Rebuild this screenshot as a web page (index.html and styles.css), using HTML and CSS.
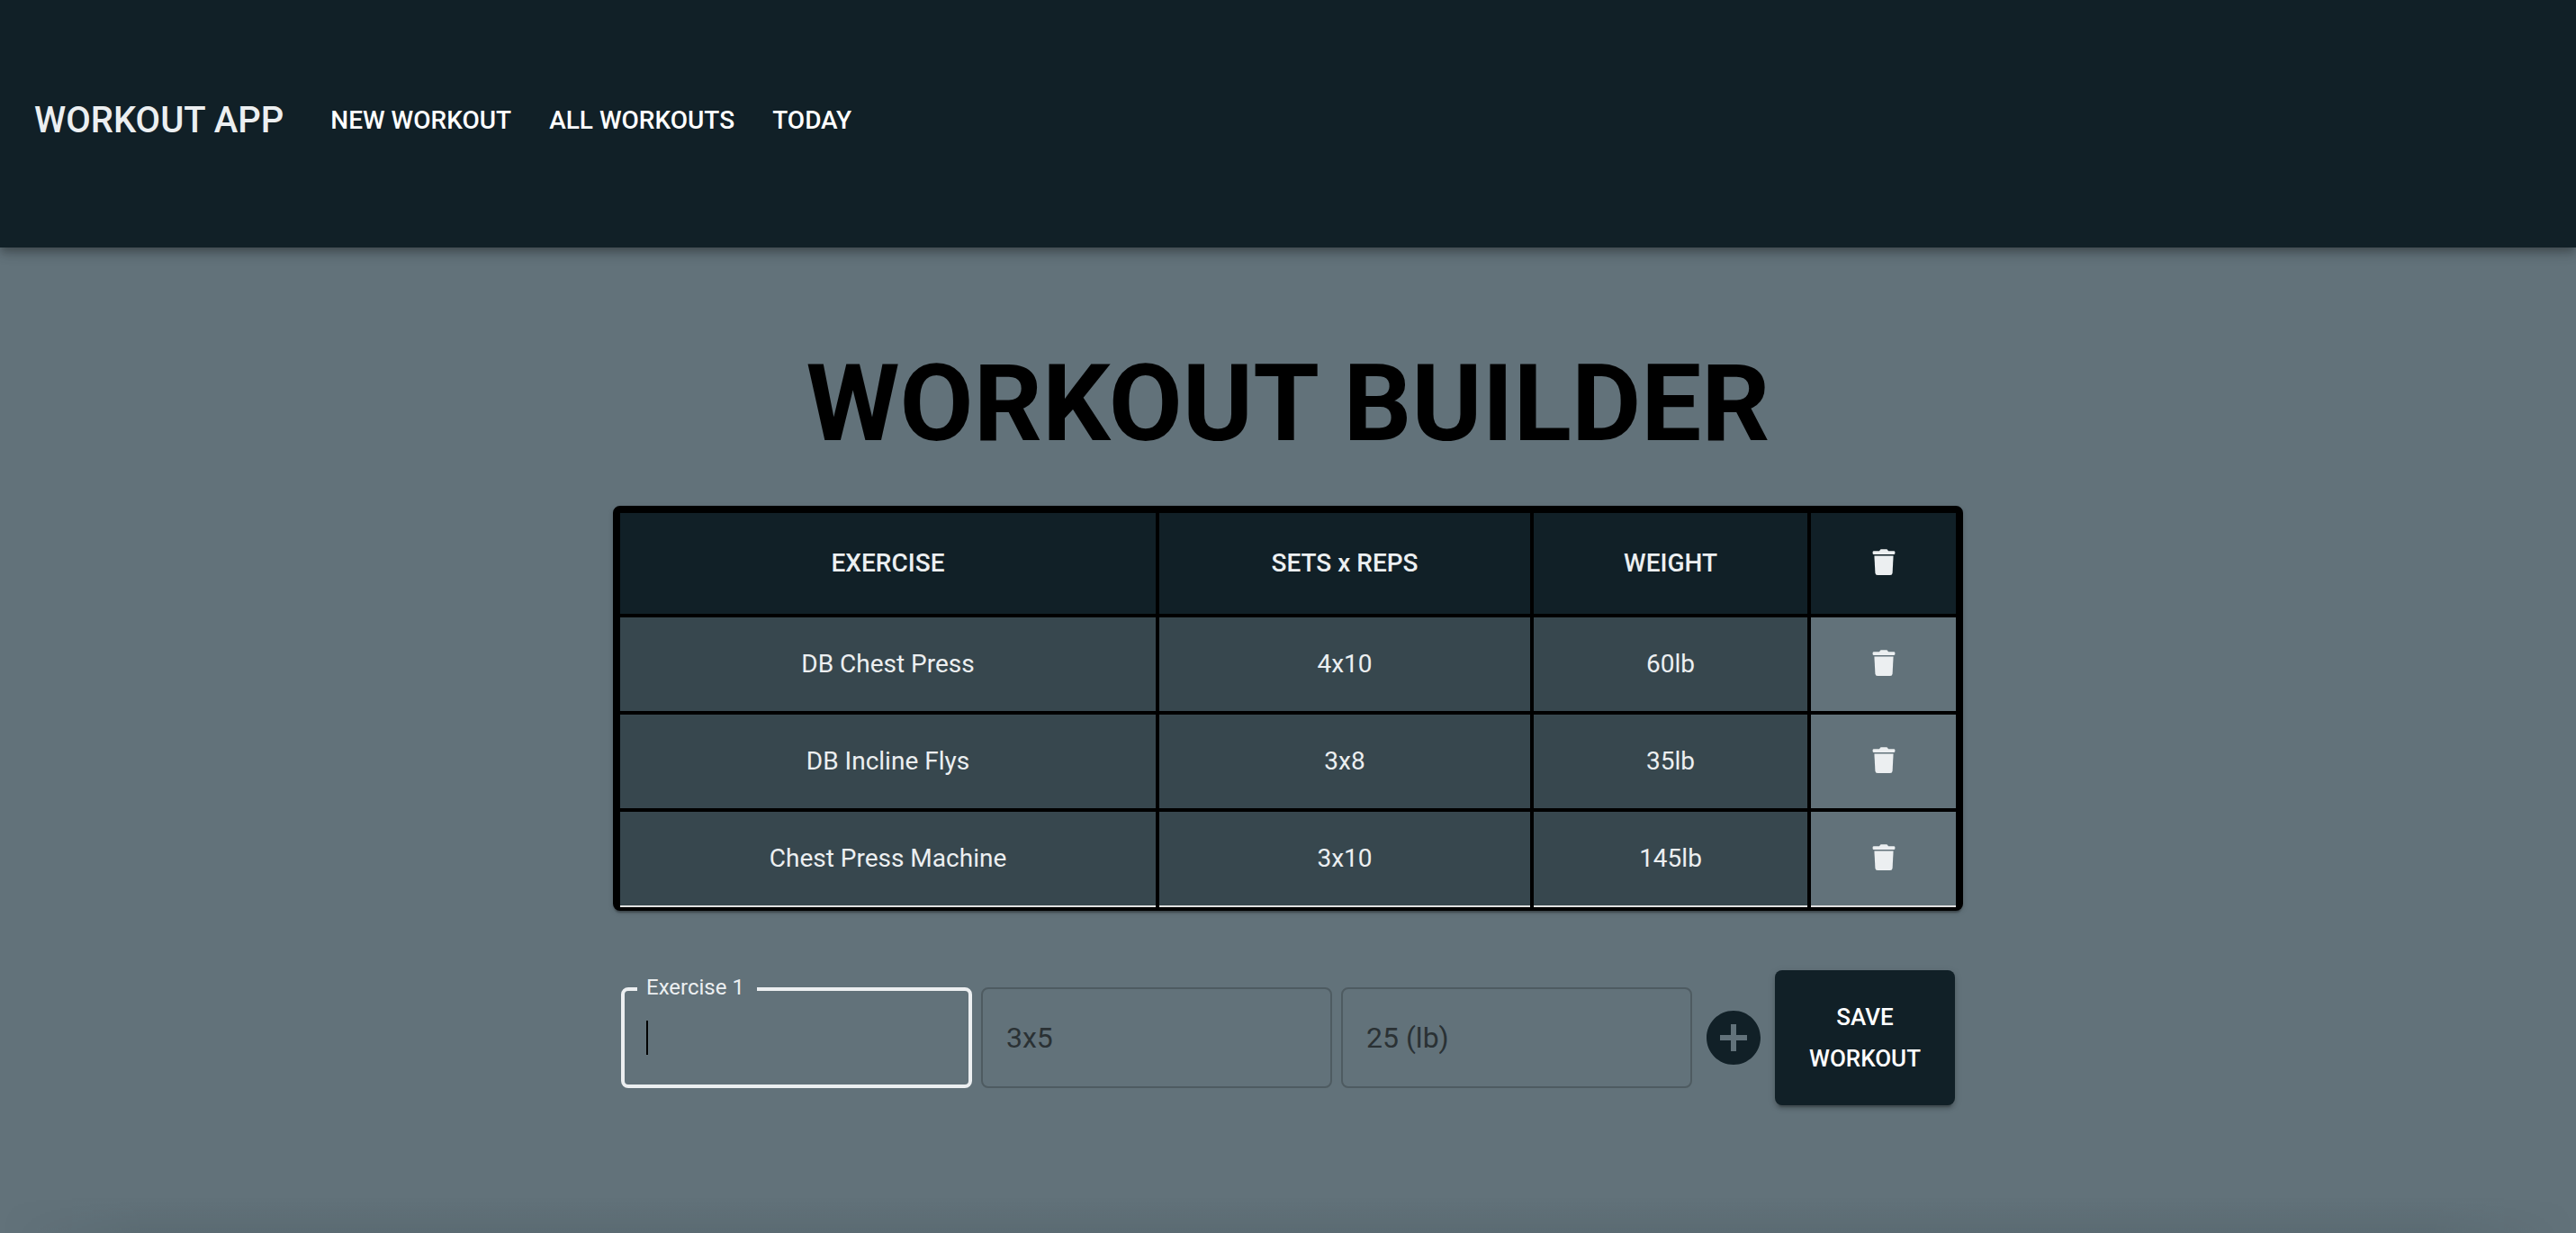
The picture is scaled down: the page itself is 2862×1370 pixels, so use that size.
FILE: index.html
```html
<!DOCTYPE html>
<html lang="en">
<head>
  <meta charset="utf-8">
  <meta name="viewport" content="width=device-width, initial-scale=1">
  <title>Workout App</title>
  <link rel="stylesheet" href="styles.css">
</head>
<body>
  <svg class="sprite" aria-hidden="true">
    <symbol id="trash" viewBox="0 0 26 30">
      <path d="M2 2.200H8L9.200 .6Q9.600 .2 10.200 .2H15.800Q16.400 .2 16.800 .6L18 2.200H24Q25.400 2.200 25.400 3.600V4.800Q25.400 6 24 6H2Q.6 6 .6 4.800V3.600Q.6 2.200 2 2.200Z"/>
      <path d="M2.400 7.400H23.600L22.600 26.400Q22.400 29 20 29H6Q3.600 29 3.400 26.400Z"/>
    </symbol>
    <symbol id="add-circle" viewBox="0 0 24 24">
      <path d="M12 2C6.480 2 2 6.480 2 12s4.480 10 10 10 10-4.480 10-10S17.520 2 12 2zm5 11h-4v4h-2v-4H7v-2h4V7h2v4h4v2z"/>
    </symbol>
  </svg>

  <header class="app-bar">
    <span class="brand">WORKOUT APP</span>
    <nav class="nav">
      <a class="nav-link" href="#new">NEW WORKOUT</a>
      <a class="nav-link" href="#all">ALL WORKOUTS</a>
      <a class="nav-link" href="#today">TODAY</a>
    </nav>
  </header>

  <main class="builder">
    <h1 class="title">WORKOUT BUILDER</h1>

    <div class="table-card">
      <table class="workout">
        <colgroup>
          <col class="col-exercise">
          <col class="col-sets">
          <col class="col-weight">
          <col class="col-delete">
        </colgroup>
        <thead>
          <tr>
            <th scope="col">EXERCISE</th>
            <th scope="col">SETS x REPS</th>
            <th scope="col">WEIGHT</th>
            <th scope="col" aria-label="Delete"><svg class="trash"><use href="#trash"/></svg></th>
          </tr>
        </thead>
        <tbody>
          <tr>
            <td>DB Chest Press</td>
            <td>4x10</td>
            <td>60lb</td>
            <td class="delete"><button class="icon-button" type="button" aria-label="Delete DB Chest Press"><svg class="trash"><use href="#trash"/></svg></button></td>
          </tr>
          <tr>
            <td>DB Incline Flys</td>
            <td>3x8</td>
            <td>35lb</td>
            <td class="delete"><button class="icon-button" type="button" aria-label="Delete DB Incline Flys"><svg class="trash"><use href="#trash"/></svg></button></td>
          </tr>
          <tr>
            <td>Chest Press Machine</td>
            <td>3x10</td>
            <td>145lb</td>
            <td class="delete"><button class="icon-button" type="button" aria-label="Delete Chest Press Machine"><svg class="trash"><use href="#trash"/></svg></button></td>
          </tr>
        </tbody>
      </table>
    </div>

    <form class="entry">
      <div class="field field-active">
        <label class="field-label" for="exercise">Exercise 1</label>
        <input class="field-input" id="exercise" type="text">
        <span class="caret"></span>
      </div>
      <div class="field">
        <input class="field-input" type="text" placeholder="3x5" aria-label="Sets x reps">
      </div>
      <div class="field">
        <input class="field-input" type="text" placeholder="25 (lb)" aria-label="Weight">
      </div>
      <button class="icon-button add" type="button" aria-label="Add exercise"><svg class="add-icon"><use href="#add-circle"/></svg></button>
      <button class="save" type="submit">SAVE WORKOUT</button>
    </form>
  </main>

  <div class="page-shade"></div>
</body>
</html>
```
FILE: styles.css
```css
* {
  box-sizing: border-box;
}

body {
  display: flex;
  flex-direction: column;
  margin: 0;
  min-height: 100vh;
  background: #62727a;
  color: #eceff1;
  font-family: Roboto, "Liberation Sans", sans-serif;
}

.sprite {
  display: none;
}

svg {
  display: block;
  fill: currentColor;
}

.app-bar {
  display: flex;
  align-items: center;
  gap: 52px;
  padding: 102px 38px 109px;
  background: #112027;
  box-shadow: 0 4px 8px -2px rgba(0, 0, 0, .2), 0 8px 10px rgba(0, 0, 0, .14), 0 2px 20px rgba(0, 0, 0, .12);
}

.brand {
  font-size: 40px;
  font-weight: 500;
  line-height: 64px;
}

.nav {
  display: flex;
  gap: 42px;
}

.nav-link {
  color: #fff;
  font-size: 28px;
  font-weight: 500;
  line-height: 48px;
  text-decoration: none;
}

.builder {
  width: 1500px;
  max-width: 100%;
  margin: 0 auto;
  padding: 98px 0 40px;
}

.title {
  margin: 0;
  color: #000;
  font-size: 119px;
  font-weight: 700;
  line-height: 151px;
  text-align: center;
  white-space: nowrap;
}

.table-card {
  margin-top: 38px;
  border: 4px solid #000;
  border-radius: 8px;
  background: #000;
  box-shadow: 0 4px 2px -2px rgba(0, 0, 0, .2), 0 2px 2px rgba(0, 0, 0, .14), 0 2px 6px rgba(0, 0, 0, .12);
}

.workout {
  width: 100%;
  border-collapse: separate;
  border-spacing: 4px 0;
  table-layout: fixed;
}

.col-exercise {
  width: 595px;
}

.col-sets {
  width: 412px;
}

.col-weight {
  width: 304px;
}

.workout th,
.workout td {
  padding: 0 0 2px;
  font-size: 28px;
  text-align: center;
}

.workout th {
  height: 120px;
  border-top: 4px solid #000;
  border-bottom: 4px solid #000;
  background: #112027;
  font-weight: 500;
}

.workout td {
  height: 108px;
  border-bottom: 4px solid #000;
  background: #37474e;
  font-weight: 400;
}

.workout .delete {
  background: #62727a;
}

.workout tbody tr:last-child td {
  height: 106px;
  border-bottom: 2px solid #e0e0e0;
}

.icon-button {
  display: block;
  margin: 0 auto;
  padding: 0;
  border: 0;
  background: none;
  color: inherit;
}

.trash {
  width: 26px;
  height: 30px;
  margin: 0 auto;
}

.entry {
  display: flex;
  align-items: center;
  gap: 10px;
  margin-top: 66px;
  padding: 0 9px;
}

.field {
  position: relative;
  flex: 1;
  min-width: 0;
}

.field-input {
  display: block;
  width: 100%;
  height: 112px;
  padding: 0 26px;
  border: 2px solid #4e5b61;
  border-radius: 8px;
  outline: 0;
  background: transparent;
  color: #112027;
  font: inherit;
  font-size: 32px;
}

.field-input::placeholder {
  color: #2a3134;
  opacity: 1;
}

.field-active .field-input {
  border: 4px solid #eceff1;
}

.field-label {
  position: absolute;
  top: -16px;
  left: 18px;
  padding: 0 14px 0 10px;
  background: #62727a;
  font-size: 24px;
  line-height: 32px;
}

.caret {
  position: absolute;
  top: 37px;
  left: 28px;
  width: 2px;
  height: 38px;
  background: #000;
}

.add {
  margin: 0;
  color: #112027;
}

.add-icon {
  width: 72px;
  height: 72px;
}

.save {
  width: 200px;
  height: 150px;
  padding: 8px 32px;
  border: 0;
  border-radius: 8px;
  background: #112027;
  box-shadow: 0 6px 2px -4px rgba(0, 0, 0, .2), 0 4px 4px rgba(0, 0, 0, .14), 0 2px 10px rgba(0, 0, 0, .12);
  color: #fff;
  font: inherit;
  font-size: 26px;
  font-weight: 500;
  line-height: 46px;
}

.page-shade {
  height: 40px;
  margin-top: auto;
  background: linear-gradient(rgba(0, 20, 20, 0), rgba(0, 20, 20, .07));
  mask-image: linear-gradient(to right, transparent, #000 160px, #000 calc(100% - 160px), transparent);
}
```
